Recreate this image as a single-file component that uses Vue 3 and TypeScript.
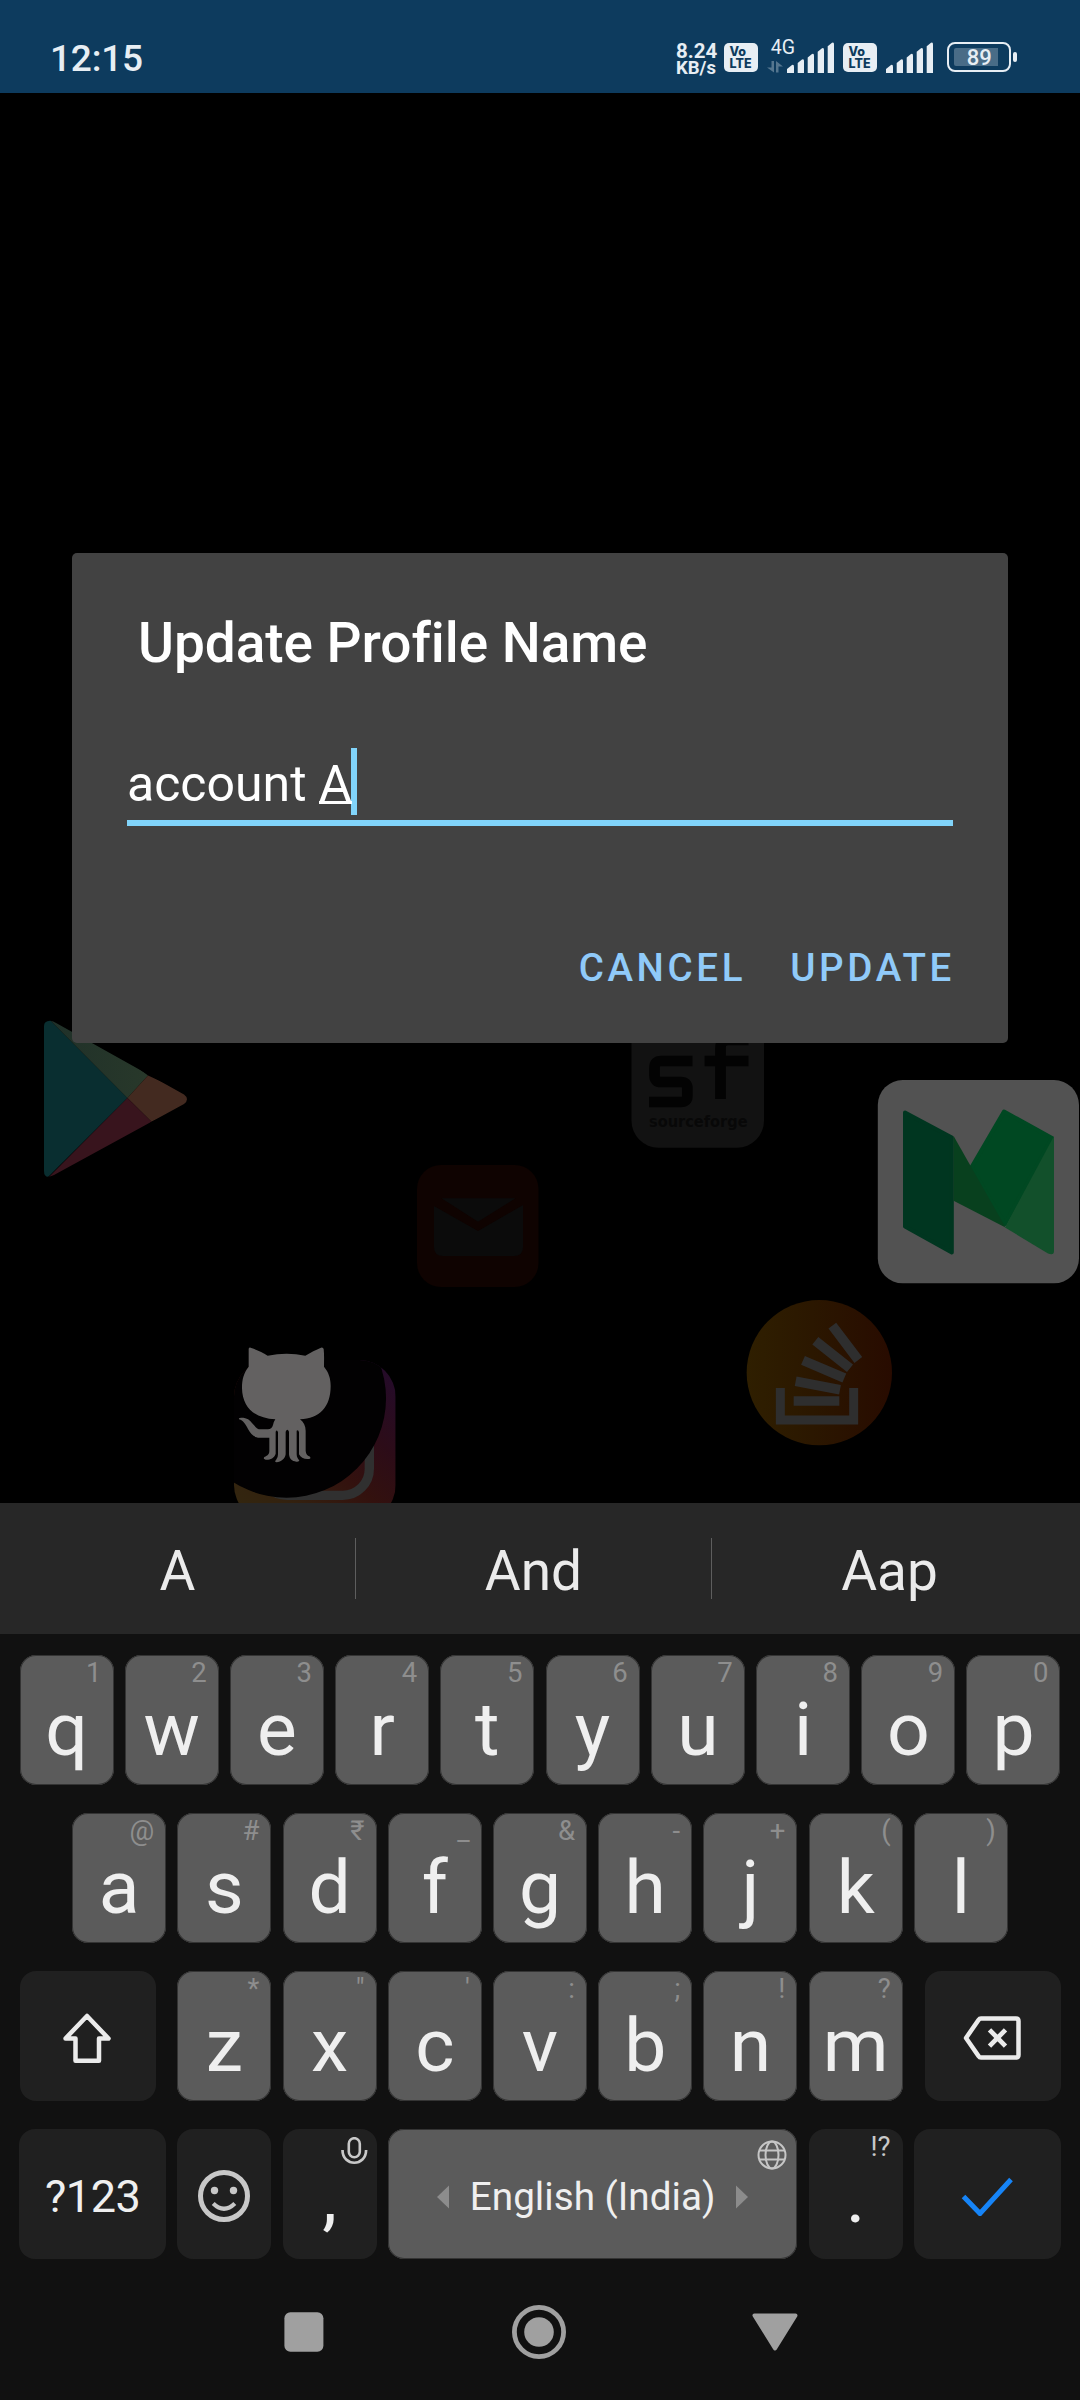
<script setup lang="ts">
interface KeyDef {
  label: string
  hint: string
}

const toKeys = (letters: string, hints: string): KeyDef[] =>
  [...letters].map((label, i) => ({ label, hint: [...hints][i] }))

const topRow = toKeys('qwertyuiop', '1234567890')
const homeRow = toKeys('asdfghjkl', '@#₹_&-+()')
const bottomRow = toKeys('zxcvbnm', '*"\':;!?')
const suggestions: string[] = ['A', 'And', 'Aap']
const signalBars = [
  'M0 31V27L5 23Q7 22 7 25V31Z',
  'M10.7 31V21L15 17.6Q17 16.500 17 19V31Z',
  'M20.7 31V15.400L25 12Q27 11 27 13.500V31Z',
  'M30.700 31V9.800L35 6.300Q37 5.300 37 8V31Z',
  'M40.700 31V4.200L45 .7Q47 -.3 47 2.200V31Z'
]
</script>

<template>
  <div class="screen">
    <header class="status">
      <span class="clock">12:15</span>
      <div class="rate"><span class="rate-num">8.24</span><span class="rate-unit">KB/s</span></div>
      <div class="volte first"><span>Vo</span><span>LTE</span></div>
      <div class="network">
        <span class="gen">4G</span>
        <svg class="arrows" width="16" height="12" viewBox="0 0 16 12">
          <path d="M4.500 0H7V11.500L0 6.500H4.500ZM9 0L16 5.500H11.500V11.500H9Z" fill="#55768f" />
        </svg>
      </div>
      <svg class="signal one" width="47" height="31" viewBox="0 0 47 31">
        <path v-for="d in signalBars" :key="d" :d="d" fill="#e7eef4" />
      </svg>
      <div class="volte second"><span>Vo</span><span>LTE</span></div>
      <svg class="signal two" width="47" height="31" viewBox="0 0 47 31">
        <path v-for="d in signalBars" :key="d" :d="d" fill="#e7eef4" />
      </svg>
      <div class="battery"><span class="level"></span><span class="percent">89</span></div>
      <span class="nub"></span>
    </header>

    <main class="stage">
      <svg class="floating" width="1080" height="1410" viewBox="0 93 1080 1410">
        <defs>
          <linearGradient id="so" x1="0" x2="1"><stop offset="0" stop-color="#2f1f00" /><stop offset=".45" stop-color="#2b1700" /><stop offset="1" stop-color="#280b00" /></linearGradient>
          <linearGradient id="ig" x1="0" y1="1" x2=".9" y2="0"><stop offset="0" stop-color="#33280f" /><stop offset=".25" stop-color="#33210f" /><stop offset=".5" stop-color="#33110e" /><stop offset=".72" stop-color="#2c0c18" /><stop offset="1" stop-color="#240b2a" /></linearGradient>
          <linearGradient id="gr" x1="0" x2="1"><stop offset="0" stop-color="#1f3029" /><stop offset="1" stop-color="#28382a" /></linearGradient>
          <clipPath id="play"><path d="M44 1026Q44 1021 50 1020.700Q53 1021 57 1023.500L184 1094.500Q190 1099 184 1104L54 1175Q44 1180 44 1171Z" /></clipPath>
          <clipPath id="tile"><rect x="42" y="90" width="485" height="485" rx="110" /></clipPath>
        </defs>

        <g clip-path="url(#play)">
          <path d="M40 1010V1185L127.400 1098Z" fill="#092e30" />
          <path d="M40 1010L127.400 1098L148 1075.500L60 1010Z" fill="url(#gr)" />
          <path d="M127.400 1098L148 1075.500L200 1099L151.500 1121.800Z" fill="#432a20" />
          <path d="M127.400 1098L151.500 1121.800L60 1190L40 1186Z" fill="#38141d" />
        </g>

        <g>
          <rect x="631.500" y="1015" width="132.500" height="132.700" rx="27" fill="#121212" />
          <g fill="none" stroke="#030303" stroke-width="10.700">
            <path d="M692.500 1061H661Q654.500 1061 654.500 1068V1075.500Q654.500 1082 661 1082H681Q687.300 1082 687.300 1088V1096Q687.300 1102 681 1102H649" />
            <path d="M748.500 1040H728Q720.500 1040 720.500 1048V1099M704.600 1061H748.500" />
          </g>
          <text x="649" y="1126.700" textLength="98.500" lengthAdjust="spacingAndGlyphs" class="forge">sourceforge</text>
        </g>

        <g>
          <rect x="877.800" y="1080" width="201.200" height="203.300" rx="25" fill="#525252" />
          <g stroke-linejoin="round" stroke-width="4">
            <path d="M905 1112.500L951.800 1137.500V1252.500L905 1226.500Z" fill="#003620" stroke="#003620" />
            <path d="M971.500 1167.300L1004 1111.500L1052 1138L1005 1224Z" fill="#004822" stroke="#004822" />
          </g>
          <path d="M953.600 1136L1005.500 1227.500L953.600 1200.700Z" fill="#08401e" />
          <path d="M1054 1136V1251Q1054 1256 1048 1253.500L1005 1227.500Z" fill="#12502b" />
        </g>

        <g>
          <rect x="417" y="1165" width="121.500" height="122" rx="24" fill="#0f0301" />
          <path d="M441.500 1198.300H515.500L478 1221.700Z" fill="#0b0b0b" />
          <path d="M434 1206L478 1231L523 1205V1247Q523 1256 514 1256H443Q434 1256 434 1247Z" fill="#0b0b0b" />
        </g>

        <g transform="translate(700 1280) scale(.33333)">
          <circle cx="358" cy="278" r="218" fill="url(#so)" />
          <g fill="none" stroke="#2e2e2e" stroke-width="27">
            <path d="M241 324V420H461V324" />
            <path d="M281 363H418M287 304L420 329M309 241L433 294M346 182L450 265M397 137L475 240" stroke-width="29" />
          </g>
        </g>

        <g transform="translate(220 1330) scale(.33333)">
          <g clip-path="url(#tile)">
            <rect x="42" y="90" width="485" height="485" fill="url(#ig)" />
            <rect x="121" y="169" width="327" height="327" rx="80" fill="none" stroke="#303030" stroke-width="28" />
            <circle cx="200" cy="205" r="298" fill="#020102" />
          </g>
          <path fill="#636161" d="M86 56Q88 51 94 54C112 60 128 67 143 77Q200 66 256 77C272 67 288 59 303 53Q309 51 311 57C313 75 312 93 312 110C326 127 332 145 332 168C332 231 299 266 240 268C251 276 257 289 257 302V362C258 374 264 377 270 380Q274 387 266 387C252 388 242 383 237 373V307Q235 298 230 302V373C230 382 234 387 238 391Q238 396 229 395C216 394 208 386 207 373V305Q202 294 197 305V373C195 387 183 396 170 397Q162 395 168 390Q174 384 174 373V307Q171 297 167 305V371C163 385 149 390 137 389Q128 387 133 381C144 376 148 372 148 362V323H119C100 323 93 311 84 297C76 282 70 272 57 268Q55 263 64 263C82 263 89 270 98 281C109 293 112 298 122 298H144Q155 298 159 285Q161 275 166 268C102 264 67 232 66 174C66 146 72 128 86 110Z" />
        </g>
      </svg>

      <section class="dialog">
        <h1>Update Profile Name</h1>
        <div class="field"><span>account&nbsp;</span><span class="composing">A</span><i class="caret"></i></div>
        <div class="actions"><span>CANCEL</span><span>UPDATE</span></div>
      </section>
    </main>

    <section class="keyboard">
      <div class="suggestions">
        <span v-for="word in suggestions" :key="word">{{ word }}</span>
      </div>
      <div class="rows">
        <div class="row">
          <div v-for="k in topRow" :key="k.label" class="key">{{ k.label }}<small>{{ k.hint }}</small></div>
        </div>
        <div class="row">
          <div v-for="k in homeRow" :key="k.label" class="key">{{ k.label }}<small>{{ k.hint }}</small></div>
        </div>
        <div class="row third">
          <div class="key dark wide">
            <svg width="50" height="52" viewBox="0 0 50 52"><path d="M25 4L46.500 26.500H37V48.800H13.500V26.500H3.500Z" fill="none" stroke="#ebebeb" stroke-width="4.500" stroke-linejoin="round" /></svg>
          </div>
          <div class="letters">
            <div v-for="k in bottomRow" :key="k.label" class="key">{{ k.label }}<small>{{ k.hint }}</small></div>
          </div>
          <div class="key dark wide">
            <svg width="58" height="44" viewBox="0 0 58 44">
              <path d="M18 2.500H53Q55.500 2.500 55.500 5V39Q55.500 41.500 53 41.500H18Q16.500 41.500 15.500 40L3 22L15.500 4Q16.500 2.500 18 2.500Z" fill="none" stroke="#ebebeb" stroke-width="4.500" stroke-linejoin="round" />
              <path d="M26.500 13.800L42.500 30.200M42.500 13.800L26.500 30.200" stroke="#ebebeb" stroke-width="4.700" />
            </svg>
          </div>
        </div>
        <div class="row">
          <div class="key dark action symbols">?123</div>
          <div class="key dark">
            <svg width="54" height="54" viewBox="0 0 54 54">
              <circle cx="27" cy="27" r="23.500" fill="none" stroke="#c8c8c8" stroke-width="5" />
              <circle cx="17.500" cy="21.500" r="3.700" fill="#c8c8c8" /><circle cx="36.500" cy="21.500" r="3.700" fill="#c8c8c8" />
              <path d="M16.200 34.500Q27 45 37.800 34.500" fill="none" stroke="#c8c8c8" stroke-width="4.200" />
            </svg>
          </div>
          <div class="key dark punct">,
            <svg class="mic" width="27" height="28" viewBox="0 0 27 28"><rect x="7.800" y="1.200" width="11" height="19" rx="5.500" fill="none" stroke="#c8c8c8" stroke-width="2.600" /><path d="M1.500 13C1.500 30 25.100 30 25.100 13" fill="none" stroke="#c8c8c8" stroke-width="2.700" /></svg>
          </div>
          <div class="key space">
            <svg width="13" height="24" viewBox="0 0 13 24"><path d="M0 12L12 .5V23.500Z" fill="#8c8c8c" /></svg>
            <span>English (India)</span>
            <svg width="13" height="24" viewBox="0 0 13 24"><path d="M13 12L1 .5V23.500Z" fill="#8c8c8c" /></svg>
            <svg class="globe" width="30" height="30" viewBox="0 0 30 30"><g fill="none" stroke="#c6c6c6" stroke-width="2"><circle cx="15" cy="15" r="13.500" /><ellipse cx="15" cy="15" rx="6.500" ry="13.500" /><path d="M2.500 10.500H27.500M2.500 19.500H27.500" /></g></svg>
          </div>
          <div class="key dark punct">.<small class="bright">!?</small></div>
          <div class="key dark action">
            <svg width="54" height="40" viewBox="0 0 54 40"><path d="M3.500 20.500L20 37.500L51 3.500" fill="none" stroke="#1684f7" stroke-width="5" /></svg>
          </div>
        </div>
      </div>
    </section>

    <nav class="navbar">
      <svg width="40" height="40" viewBox="0 0 40 40"><rect x=".4" y=".2" width="39" height="39.500" rx="6" fill="#a0a0a0" /></svg>
      <svg width="54" height="54" viewBox="0 0 54 54"><circle cx="27" cy="27" r="24.600" fill="none" stroke="#a0a0a0" stroke-width="4.800" /><circle cx="27" cy="27" r="14.800" fill="#a0a0a0" /></svg>
      <svg class="back" width="46" height="38" viewBox="0 0 46 38"><path d="M2.500 2.500H43.500L23 35.500Z" fill="#a0a0a0" stroke="#a0a0a0" stroke-width="4" stroke-linejoin="round" /></svg>
    </nav>
  </div>
</template>

<style>
body {
  background: #000;
}
</style>

<style scoped>
.screen {
  width: 1080px;
  height: 2400px;
  display: flex;
  flex-direction: column;
  overflow: hidden;
  background: #000;
  font-family: Roboto, sans-serif;
  box-sizing: border-box;
}
.screen *,
.screen *::after {
  box-sizing: border-box;
}
svg {
  display: block;
  flex: none;
}
.status {
  height: 93px;
  flex: none;
  display: flex;
  align-items: flex-start;
  background: #0d3b5e;
  color: #e7eef4;
}
.clock {
  width: 626px;
  margin: 37px 0 0 50px;
  font-size: 37px;
  line-height: 44px;
  font-weight: 500;
  letter-spacing: -.2px;
}
.rate {
  width: 48px;
  margin-top: 41px;
  display: flex;
  flex-direction: column;
  font-weight: 700;
  white-space: nowrap;
}
.rate-num {
  font-size: 20.500px;
  line-height: 20px;
}
.rate-unit {
  font-size: 18.500px;
  line-height: 15px;
}
.volte {
  width: 34px;
  height: 29px;
  margin-top: 43px;
  padding: 2.500px 0 0 5.500px;
  display: flex;
  flex-direction: column;
  border-radius: 5px;
  background: #e7eef4;
  color: #0d3b5e;
  font: 800 12.500px/12.500px Inter, sans-serif;
}
.second {
  margin-left: 9.300px;
}
.network {
  width: 28.700px;
  margin: 37px 0 0 9.300px;
  white-space: nowrap;
}
.gen {
  display: block;
  width: 30px;
  padding-left: 3.500px;
  font-size: 19.500px;
  line-height: 22px;
  font-weight: 400;
}
.arrows {
  margin-top: 1.700px;
}
.signal {
  margin-top: 42px;
}
.one {
  margin-left: -9.300px;
}
.two {
  margin-left: 9.500px;
}
.battery {
  position: relative;
  width: 63.500px;
  height: 30px;
  margin: 42px 0 0 14px;
  border: 2.800px solid #e7eef4;
  border-radius: 8px;
  display: flex;
  align-items: center;
  justify-content: center;
}
.level {
  position: absolute;
  left: 5px;
  top: 4px;
  width: 44px;
  height: 18px;
  border-radius: 2px 0 0 2px;
  background: #496c87;
}
.percent {
  position: relative;
  font-size: 22px;
  line-height: 26px;
  padding-top: 1px;
  font-weight: 500;
}
.nub {
  width: 4px;
  height: 10px;
  margin: 52px 0 0 2px;
  border-radius: 2px;
  background: #e7eef4;
}
.stage {
  position: relative;
  height: 1410px;
  flex: none;
  padding: 460px 72px 0;
}
.floating {
  position: absolute;
  inset: 0;
}
.forge {
  font: 700 15px "DejaVu Sans", sans-serif;
  fill: #080808;
}
.dialog {
  position: relative;
  height: 490px;
  padding: 57.500px 55px 0;
  border-radius: 5px;
  background: #424242;
}
h1 {
  margin: 0 0 0 11px;
  font-size: 55px;
  line-height: 64px;
  font-weight: 500;
  letter-spacing: -.06px;
  color: #fff;
}
.field {
  position: relative;
  height: 151px;
  padding-top: 80px;
  display: flex;
  border-bottom: 6px solid #81d4fa;
  font-size: 50px;
  line-height: 58px;
  color: #fff;
}
.composing {
  height: 46px;
  line-height: 58px;
  position: relative;
}
.composing::after {
  content: '';
  position: absolute;
  left: 0;
  right: 0;
  bottom: -3.500px;
  height: 3px;
  background: #fff;
}
.caret {
  height: 67px;
  width: 6px;
  margin: -7px 0 0 -1px;
  background: #81d4fa;
}
.actions {
  margin: 119px -2px 0 0;
  display: flex;
  justify-content: flex-end;
  gap: 44px;
  color: #90caf9;
  font-size: 38.500px;
  line-height: 46px;
  font-weight: 500;
  letter-spacing: 3.650px;
}
.keyboard {
  flex: none;
  background: #111;
}
.suggestions {
  height: 131px;
  padding-right: 13px;
  display: flex;
  align-items: center;
  background: #272727;
  color: #ebebeb;
  font-size: 55px;
}
.suggestions span {
  flex: 1;
  height: 61px;
  line-height: 67px;
  text-align: center;
  border-right: 1px solid #5e5e5e;
}
.suggestions span:last-child {
  border-right: 0;
}
.rows {
  padding: 21px 19.500px 0;
  display: flex;
  flex-direction: column;
  gap: 28px;
}
.row {
  display: flex;
  justify-content: center;
  gap: 11.220px;
}
.third {
  justify-content: space-between;
}
.letters {
  display: flex;
  gap: 11.220px;
}
.key {
  position: relative;
  width: 94px;
  height: 130px;
  flex: none;
  padding-top: 17px;
  display: flex;
  align-items: center;
  justify-content: center;
  border-radius: 16px;
  background: #5b5b5b;
  box-shadow: inset 0 0 0 1px #343434;
  color: #efefef;
  font-size: 75px;
  line-height: 88px;
}
small {
  position: absolute;
  top: 0;
  right: 12px;
  font-size: 27.500px;
  line-height: 35px;
  color: #8e8e8e;
}
.bright {
  color: #c8c8c8;
}
.dark {
  padding-top: 4px;
  background: #202020;
  box-shadow: none;
}
.wide {
  width: 136px;
}
.wide:first-child {
  padding-right: 2px;
}
.wide:last-child {
  padding-right: 1px;
}
.action {
  width: 147px;
}
.symbols {
  padding-top: 6px;
  font-size: 45px;
  letter-spacing: -.5px;
}
.punct {
  padding-top: 4px;
}
.mic {
  position: absolute;
  right: 9px;
  top: 8px;
}
.space {
  width: 409.600px;
  padding-top: 5px;
  gap: 19.500px;
  font-size: 38.700px;
}
.globe {
  position: absolute;
  right: 10.500px;
  top: 10.500px;
}
.navbar {
  flex: 1;
  padding: 5px 0 0 1px;
  display: flex;
  align-items: center;
  justify-content: center;
  gap: 188px;
  background: #111;
}
.back {
  margin-left: -2px;
}
</style>
